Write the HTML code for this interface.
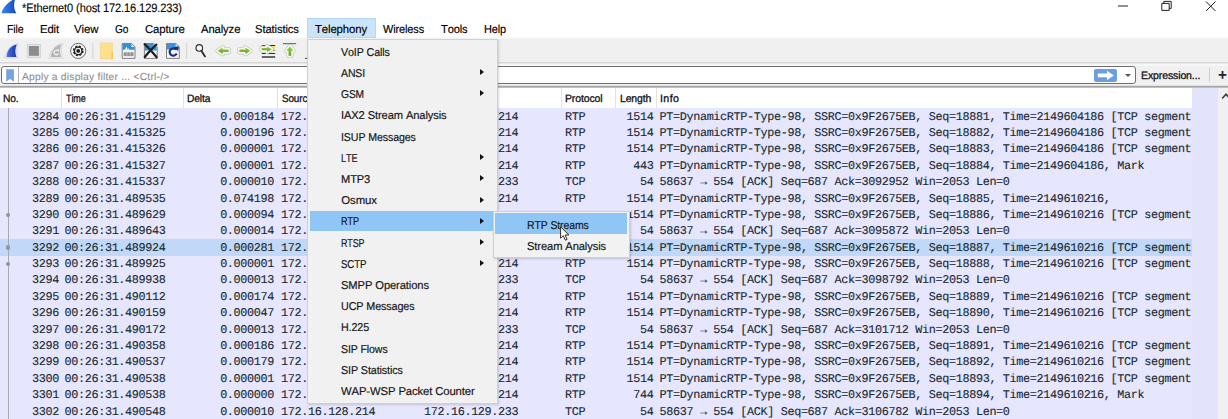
<!DOCTYPE html>
<html><head><meta charset="utf-8"><title>Wireshark</title>
<style>
html,body{margin:0;padding:0}
body{text-rendering:geometricPrecision;width:1228px;height:419px;overflow:hidden;position:relative;background:#fff;font-family:"Liberation Sans",sans-serif;font-size:12px;color:#000}
.abs,.abs *{position:absolute}
div{position:absolute;box-sizing:border-box;white-space:nowrap}
.t{line-height:16px;height:16px}
.m{font-family:"Liberation Mono",monospace;font-size:11.8px;letter-spacing:-0.347px;color:#17292f;-webkit-text-stroke:0.12px #17292f;line-height:16px;height:16px;white-space:pre}
.row{left:0;width:1191.5px;background:#e7e6ff}
.mi{left:341.5px;font-size:12.4px;line-height:16px;color:#111}
.arr{left:480.4px;width:0;height:0;border-left:4.8px solid #111;border-top:3.8px solid transparent;border-bottom:3.8px solid transparent}
.hd{font-size:11.6px;color:#111;line-height:16px;top:90.5px}
.sep{top:88px;width:1px;height:20px;background:#e2e2e2}
</style></head><body>

<div style="left:21.70px;top:0.00px;font-size:12.2px;line-height:16px;height:16px;letter-spacing:-0.120px;color:#000;font-kerning:none;-webkit-text-stroke:0.1px #000;transform:scaleX(0.9061);transform-origin:0 0;">*Ethernet0 (host 172.16.129.233)</div>
<svg style="position:absolute;left:0;top:0" width="20" height="16" viewBox="0 0 20 16"><defs><linearGradient id="tfin" x1="0" y1="0" x2="1" y2="0"><stop offset="0" stop-color="#3f86ee"/><stop offset="0.55" stop-color="#2467d8"/><stop offset="1" stop-color="#1740a8"/></linearGradient></defs><path d="M1.4 13.3C2.6 8 7.5 2 15.4 -1.5C13.4 4 13.6 9 16.4 13.3Z" fill="url(#tfin)"/></svg>
<svg style="position:absolute;left:1110px;top:0" width="118" height="18" viewBox="0 0 118 18"><g stroke="#222" stroke-width="1" fill="none"><path d="M8 6H18"/><path d="M51.8 3.4h7.4v7h-7.4z" fill="#fff"/><path d="M53.8 3.4v-2h7.4v7h-2"/><path d="M96 1.5l9.5 9.5M105.5 1.5L96 11"/></g></svg>
<div style="left:0;top:36px;width:1228px;height:52px;background:linear-gradient(#fff 0,#fff 0.5px,#f0f0f0 3.5px,#f0f0f0 100%)"></div>
<div style="left:307px;top:18px;width:69px;height:20px;background:#cce4f7;border:1px solid #b2d8f7"></div>
<div style="left:0;top:62px;width:1228px;height:1px;background:#d6d6d6"></div>
<div style="left:0;top:63px;width:1228px;height:1px;background:#e6e6e6"></div>
<div style="left:0;top:64px;width:1228px;height:2px;background:#f7f7f7"></div>
<div style="left:0;top:85px;width:1228px;height:1px;background:#e2e2e2"></div>
<div style="left:0;top:86px;width:1228px;height:1px;background:#a4a4a4"></div>
<div style="left:0;top:87px;width:1228px;height:1px;background:#c0c0c0"></div>
<div style="left:7.30px;top:22.00px;font-size:11.5px;line-height:16px;height:16px;letter-spacing:-0.120px;color:#000;font-kerning:none;-webkit-text-stroke:0.15px #000;transform:scaleX(0.9191);transform-origin:0 0;">File</div>
<div style="left:40.00px;top:22.00px;font-size:11.5px;line-height:16px;height:16px;letter-spacing:-0.120px;color:#000;font-kerning:none;-webkit-text-stroke:0.15px #000;transform:scaleX(0.9817);transform-origin:0 0;">Edit</div>
<div style="left:74.30px;top:22.00px;font-size:11.5px;line-height:16px;height:16px;letter-spacing:-0.120px;color:#000;font-kerning:none;-webkit-text-stroke:0.15px #000;transform:scaleX(0.9921);transform-origin:0 0;">View</div>
<div style="left:114.50px;top:22.00px;font-size:11.5px;line-height:16px;height:16px;letter-spacing:-0.120px;color:#000;font-kerning:none;-webkit-text-stroke:0.15px #000;transform:scaleX(0.8804);transform-origin:0 0;">Go</div>
<div style="left:144.80px;top:22.00px;font-size:11.5px;line-height:16px;height:16px;letter-spacing:-0.120px;color:#000;font-kerning:none;-webkit-text-stroke:0.15px #000;transform:scaleX(0.9902);transform-origin:0 0;">Capture</div>
<div style="left:200.50px;top:22.00px;font-size:11.5px;line-height:16px;height:16px;letter-spacing:-0.120px;color:#000;font-kerning:none;-webkit-text-stroke:0.15px #000;transform:scaleX(0.9803);transform-origin:0 0;">Analyze</div>
<div style="left:255.30px;top:22.00px;font-size:11.5px;line-height:16px;height:16px;letter-spacing:-0.120px;color:#000;font-kerning:none;-webkit-text-stroke:0.15px #000;transform:scaleX(0.9770);transform-origin:0 0;">Statistics</div>
<div style="left:315.40px;top:22.00px;font-size:11.5px;line-height:16px;height:16px;letter-spacing:-0.120px;color:#000;font-kerning:none;-webkit-text-stroke:0.15px #000;transform:scaleX(0.9878);transform-origin:0 0;">Telephony</div>
<div style="left:383.40px;top:22.00px;font-size:11.5px;line-height:16px;height:16px;letter-spacing:-0.120px;color:#000;font-kerning:none;-webkit-text-stroke:0.15px #000;transform:scaleX(0.9504);transform-origin:0 0;">Wireless</div>
<div style="left:440.60px;top:22.00px;font-size:11.5px;line-height:16px;height:16px;letter-spacing:-0.120px;color:#000;font-kerning:none;-webkit-text-stroke:0.15px #000;transform:scaleX(0.9623);transform-origin:0 0;">Tools</div>
<div style="left:483.80px;top:22.00px;font-size:11.5px;line-height:16px;height:16px;letter-spacing:-0.120px;color:#000;font-kerning:none;-webkit-text-stroke:0.15px #000;transform:scaleX(0.9531);transform-origin:0 0;">Help</div>
<svg style="position:absolute;left:0;top:38px" width="308" height="24" viewBox="0 38 308 24"><defs><linearGradient id="gfin" x1="0" y1="0" x2="1" y2="0"><stop offset="0" stop-color="#4a74e0"/><stop offset="1" stop-color="#1b36a8"/></linearGradient><linearGradient id="ggr" x1="0" y1="0" x2="0" y2="1"><stop offset="0" stop-color="#9fd24a"/><stop offset="1" stop-color="#5e9e1c"/></linearGradient></defs><path d="M4.6 58.3C5.2 50.5 10.5 44.2 18.6 43.2C16.6 48 16.4 53.5 18.4 58.3Z" fill="#e3e5ec" stroke="#d4d6de" stroke-width="0.6"/><path d="M6.6 56.9C6.9 50.4 11 45.6 16.8 44.6C15 48.5 14.8 53 16.4 56.9Z" fill="url(#gfin)"/><rect x="27.2" y="44.4" width="13.3" height="13" fill="#e4e4e4" stroke="#cfcfcf" stroke-width="0.8"/><rect x="28.9" y="46" width="10" height="9.8" fill="#8c8c8c"/><path d="M49.1 58.3C49.7 50.5 55 44.2 63.1 43.2C61.1 48 60.9 53.5 62.9 58.3Z" fill="#e2e2e2" stroke="#d6d6d6" stroke-width="0.6"/><path d="M51.1 56.9C51.4 50.4 55.5 45.6 61.3 44.6C59.5 48.5 59.3 53 60.9 56.9Z" fill="#b4b4b4"/><path d="M57.6 50.6A2.3 2.3 0 1 0 58.4 53.4" fill="none" stroke="#f6f6f6" stroke-width="1.2"/><path d="M56.4 49.6l2.8-0.4-0.6 2.7z" fill="#f6f6f6"/><circle cx="78.2" cy="50.9" r="7.6" fill="#f6f6f6" stroke="#5a5a5a" stroke-width="0.9"/><circle cx="78.2" cy="50.9" r="4.6" fill="none" stroke="#222" stroke-width="1.6" stroke-dasharray="2.2 1.41"/><circle cx="78.2" cy="50.9" r="3.7" fill="none" stroke="#222" stroke-width="1.3"/><circle cx="78.2" cy="50.9" r="1.9" fill="#111"/><rect x="92.4" y="43" width="1" height="16" fill="#d2d2d2"/><path d="M100.3 42.9H112.4V58.9H100.3Z" fill="#fde08f" stroke="#f3d27a" stroke-width="0.6"/><path d="M111 52.2H112.9V58.9H111Z" fill="#f4c430"/><path d="M111.6 53V58.4" stroke="#fbe28a" stroke-width="0.6"/><path d="M122.2 43.5H131.6L135.0 46.8V58.4H122.2Z" fill="#f4f4f4" stroke="#747474" stroke-width="0.9"/><path d="M122.7 44H131.4L134.5 47V49.8H122.7Z" fill="#2f8fdd"/><path d="M131.4 44V47H134.5Z" fill="#e4f1fc"/><path d="M124 49.8l1.6-1.2 0.9-2.4 0.9 2.8 1.2-0.8 1 1.6z" fill="#eef6fd"/><rect x="123.7" y="52.3" width="9.8" height="3.8" fill="#8e9298"/><path d="M126.9 52.3v3.8M130.2 52.3v3.8" stroke="#d0d0d0" stroke-width="0.8"/><path d="M144.4 43.5H153.8L157.20000000000002 46.8V58.4H144.4Z" fill="#f4f4f4" stroke="#747474" stroke-width="0.9"/><path d="M144.9 44H153.6L156.7 47V50.4H144.9Z" fill="#3a93dc"/><path d="M153.6 44V47H156.7Z" fill="#e4f1fc"/><path d="M144.6 44.2C148 47 153 53 156.6 57.2M156.4 44.6C153 47.5 148 53 144.8 57" stroke="#1e1e1e" stroke-width="2.2" stroke-linecap="round" fill="none"/><path d="M166.5 43.5H175.9L179.3 46.8V58.4H166.5Z" fill="#f4f4f4" stroke="#747474" stroke-width="0.9"/><path d="M167 44H175.7L178.8 47V49.4H167Z" fill="#3a93dc"/><path d="M175.7 44V47H178.8Z" fill="#e4f1fc"/><path d="M176.2 49.6A3.7 3.7 0 1 0 176.7 53.6" fill="none" stroke="#1b2f86" stroke-width="2.2"/><path d="M173.6 47.4l4.9-1.5-0.4 5.2z" fill="#1b2f86"/><rect x="186.2" y="43" width="1" height="16" fill="#d2d2d2"/><circle cx="199.3" cy="47.9" r="3.3" fill="#f6f6f6" stroke="#2a2a2a" stroke-width="1.1"/><path d="M201.4 50.8L205 56.4" stroke="#2a2a2a" stroke-width="1.8" stroke-linecap="round"/><path d="M217.8 50.8L222.6 47.6V49.5H228.6V52.1H222.6V54Z" fill="none" stroke="#b9c0b0" stroke-width="4.6" stroke-linejoin="round"/><path d="M217.8 50.8L222.6 47.6V49.5H228.6V52.1H222.6V54Z" fill="none" stroke="#f3f7ec" stroke-width="3.4" stroke-linejoin="round"/><path d="M217.8 50.8L222.6 47.6V49.5H228.6V52.1H222.6V54Z" fill="url(#ggr)"/><path d="M250.2 50.8L245.4 47.6V49.5H239.4V52.1H245.4V54Z" fill="none" stroke="#b9c0b0" stroke-width="4.6" stroke-linejoin="round"/><path d="M250.2 50.8L245.4 47.6V49.5H239.4V52.1H245.4V54Z" fill="none" stroke="#f3f7ec" stroke-width="3.4" stroke-linejoin="round"/><path d="M250.2 50.8L245.4 47.6V49.5H239.4V52.1H245.4V54Z" fill="url(#ggr)"/><rect x="270.6" y="46.2" width="4.6" height="3.4" fill="#f3e25a"/><path d="M261.8 45.5H275.2M261.8 53.5H275.2" stroke="#2c2c2c" stroke-width="1"/><path d="M261.8 57H275.2" stroke="#2c2c2c" stroke-width="1.4"/><path d="M261.8 50.5H275.2" stroke="#888" stroke-width="0.9"/><path d="M271.6 49.2L267.2 46.5V48.1H261.8V50.3H267.2V51.9Z" fill="none" stroke="#b9c0b0" stroke-width="4.6" stroke-linejoin="round"/><path d="M271.6 49.2L267.2 46.5V48.1H261.8V50.3H267.2V51.9Z" fill="none" stroke="#f3f7ec" stroke-width="3.4" stroke-linejoin="round"/><path d="M271.6 49.2L267.2 46.5V48.1H261.8V50.3H267.2V51.9Z" fill="url(#ggr)"/><path d="M282.9 43.7H296.1" stroke="#555" stroke-width="1"/><path d="M289.9 46.4L293.3 50.8H291.2V55.8H288.6V50.8H286.5Z" fill="none" stroke="#b9c0b0" stroke-width="4.6" stroke-linejoin="round"/><path d="M289.9 46.4L293.3 50.8H291.2V55.8H288.6V50.8H286.5Z" fill="none" stroke="#f3f7ec" stroke-width="3.4" stroke-linejoin="round"/><path d="M289.9 46.4L293.3 50.8H291.2V55.8H288.6V50.8H286.5Z" fill="url(#ggr)"/><path d="M304.9 58.3H308" stroke="#444" stroke-width="1"/></svg>
<div style="left:1px;top:66px;width:1135px;height:18px;background:#fff;border:1px solid #707070;border-radius:3px"></div>
<div style="left:18.3px;top:67px;width:1px;height:16px;background:#b5b5b5"></div>
<svg style="position:absolute;left:5px;top:69px" width="10" height="14" viewBox="0 0 10 14"><path d="M1.2 0.3H8.9V12.8L5.05 9.8L1.2 12.8Z" fill="#76a3e0"/></svg>
<div style="left:22.00px;top:70.00px;font-size:10.3px;line-height:16px;height:16px;letter-spacing:0.207px;color:#8e8e8e;font-kerning:none;-webkit-text-stroke:0.1px #8e8e8e;">Apply a display filter ... &lt;Ctrl-/&gt;</div>
<div style="left:1094.1px;top:68.8px;width:23.1px;height:13.1px;background:#6c9fe0;border-radius:2px"></div>
<svg style="position:absolute;left:1097px;top:70px" width="18" height="11" viewBox="0 0 18 11"><path d="M0.8 3.6H10V0.8L16.8 5.4L10 10V7.2H0.8Z" fill="#fff"/></svg>
<div style="left:1125px;top:73.6px;width:0;height:0;border-top:3.6px solid #555;border-left:3px solid transparent;border-right:3px solid transparent"></div>
<div style="left:1140.60px;top:68.00px;font-size:10.8px;line-height:16px;height:16px;letter-spacing:-0.120px;color:#111;font-kerning:none;-webkit-text-stroke:0.3px #111;transform:scaleX(0.9740);transform-origin:0 0;">Expression...</div>
<div style="left:1208.7px;top:68px;width:1px;height:14px;background:#cfcfcf"></div>
<div class="t" style="left:1218.0px;top:67.6px;font-size:15.3px;font-weight:bold;color:#222;font-family:'Liberation Sans',sans-serif">+</div>
<div style="left:0;top:88px;width:1191.5px;height:20.4px;background:#fff"></div>
<div style="left:3.20px;top:91.00px;font-size:10.7px;line-height:16px;height:16px;letter-spacing:-0.120px;color:#111;font-kerning:none;-webkit-text-stroke:0.3px #111;transform:scaleX(0.9567);transform-origin:0 0;">No.</div>
<div style="left:66.10px;top:91.00px;font-size:10.7px;line-height:16px;height:16px;letter-spacing:-0.120px;color:#111;font-kerning:none;-webkit-text-stroke:0.3px #111;transform:scaleX(0.8413);transform-origin:0 0;">Time</div>
<div style="left:186.80px;top:91.00px;font-size:10.7px;line-height:16px;height:16px;letter-spacing:-0.120px;color:#111;font-kerning:none;-webkit-text-stroke:0.3px #111;transform:scaleX(0.9592);transform-origin:0 0;">Delta</div>
<div style="left:282.20px;top:91.00px;font-size:10.7px;line-height:16px;height:16px;letter-spacing:-0.120px;color:#111;font-kerning:none;-webkit-text-stroke:0.3px #111;transform:scaleX(0.9249);transform-origin:0 0;">Source</div>
<div style="left:425.00px;top:91.00px;font-size:10.7px;line-height:16px;height:16px;letter-spacing:-0.120px;color:#111;font-kerning:none;-webkit-text-stroke:0.3px #111;transform:scaleX(0.9937);transform-origin:0 0;">Destination</div>
<div style="left:565.40px;top:91.00px;font-size:10.7px;line-height:16px;height:16px;letter-spacing:-0.120px;color:#111;font-kerning:none;-webkit-text-stroke:0.3px #111;transform:scaleX(0.9788);transform-origin:0 0;">Protocol</div>
<div style="left:619.70px;top:91.00px;font-size:10.7px;line-height:16px;height:16px;letter-spacing:-0.120px;color:#111;font-kerning:none;-webkit-text-stroke:0.3px #111;transform:scaleX(0.9743);transform-origin:0 0;">Length</div>
<div style="left:660.00px;top:91.00px;font-size:10.7px;line-height:16px;height:16px;letter-spacing:0.384px;color:#111;font-kerning:none;-webkit-text-stroke:0.3px #111;">Info</div>
<div class="sep" style="left:61px"></div>
<div class="sep" style="left:182.5px"></div>
<div class="sep" style="left:277.2px"></div>
<div class="sep" style="left:420px"></div>
<div class="sep" style="left:561.3px"></div>
<div class="sep" style="left:614.7px"></div>
<div class="sep" style="left:655.8px"></div>
<div class="row" style="top:108.40px;height:16.69px;background:#e7e6ff">
<div class="m" style="left:5px;width:54px;text-align:right;top:0.2px">3284</div>
<div class="m" style="left:64.5px;top:0.2px">00:26:31.415129</div>
<div class="m" style="left:186px;width:88px;text-align:right;top:0.2px">0.000184</div>
<div class="m" style="left:281px;top:0.2px">172.16.129.233</div>
<div class="m" style="left:424px;top:0.2px">172.16.128.214</div>
<div class="m" style="left:565px;top:0.2px">RTP</div>
<div class="m" style="left:600px;width:53.5px;text-align:right;top:0.2px">1514</div>
<div class="m" style="left:659.5px;top:0.2px">PT=DynamicRTP-Type-98, SSRC=0x9F2675EB, Seq=18881, Time=2149604186 [TCP segment</div>
</div>
<div class="row" style="top:124.79px;height:16.69px;background:#e7e6ff">
<div class="m" style="left:5px;width:54px;text-align:right;top:0.2px">3285</div>
<div class="m" style="left:64.5px;top:0.2px">00:26:31.415325</div>
<div class="m" style="left:186px;width:88px;text-align:right;top:0.2px">0.000196</div>
<div class="m" style="left:281px;top:0.2px">172.16.129.233</div>
<div class="m" style="left:424px;top:0.2px">172.16.128.214</div>
<div class="m" style="left:565px;top:0.2px">RTP</div>
<div class="m" style="left:600px;width:53.5px;text-align:right;top:0.2px">1514</div>
<div class="m" style="left:659.5px;top:0.2px">PT=DynamicRTP-Type-98, SSRC=0x9F2675EB, Seq=18882, Time=2149604186 [TCP segment</div>
</div>
<div class="row" style="top:141.17px;height:16.69px;background:#e7e6ff">
<div class="m" style="left:5px;width:54px;text-align:right;top:0.2px">3286</div>
<div class="m" style="left:64.5px;top:0.2px">00:26:31.415326</div>
<div class="m" style="left:186px;width:88px;text-align:right;top:0.2px">0.000001</div>
<div class="m" style="left:281px;top:0.2px">172.16.129.233</div>
<div class="m" style="left:424px;top:0.2px">172.16.128.214</div>
<div class="m" style="left:565px;top:0.2px">RTP</div>
<div class="m" style="left:600px;width:53.5px;text-align:right;top:0.2px">1514</div>
<div class="m" style="left:659.5px;top:0.2px">PT=DynamicRTP-Type-98, SSRC=0x9F2675EB, Seq=18883, Time=2149604186 [TCP segment</div>
</div>
<div class="row" style="top:157.56px;height:16.69px;background:#e7e6ff">
<div class="m" style="left:5px;width:54px;text-align:right;top:0.2px">3287</div>
<div class="m" style="left:64.5px;top:0.2px">00:26:31.415327</div>
<div class="m" style="left:186px;width:88px;text-align:right;top:0.2px">0.000001</div>
<div class="m" style="left:281px;top:0.2px">172.16.129.233</div>
<div class="m" style="left:424px;top:0.2px">172.16.128.214</div>
<div class="m" style="left:565px;top:0.2px">RTP</div>
<div class="m" style="left:600px;width:53.5px;text-align:right;top:0.2px">443</div>
<div class="m" style="left:659.5px;top:0.2px">PT=DynamicRTP-Type-98, SSRC=0x9F2675EB, Seq=18884, Time=2149604186, Mark</div>
</div>
<div class="row" style="top:173.94px;height:16.69px;background:#e7e6ff">
<div class="m" style="left:5px;width:54px;text-align:right;top:0.2px">3288</div>
<div class="m" style="left:64.5px;top:0.2px">00:26:31.415337</div>
<div class="m" style="left:186px;width:88px;text-align:right;top:0.2px">0.000010</div>
<div class="m" style="left:281px;top:0.2px">172.16.128.214</div>
<div class="m" style="left:424px;top:0.2px">172.16.129.233</div>
<div class="m" style="left:565px;top:0.2px">TCP</div>
<div class="m" style="left:600px;width:53.5px;text-align:right;top:0.2px">54</div>
<div class="m" style="left:659.5px;top:0.2px">58637 → 554 [ACK] Seq=687 Ack=3092952 Win=2053 Len=0</div>
</div>
<div class="row" style="top:190.33px;height:16.69px;background:#e7e6ff">
<div class="m" style="left:5px;width:54px;text-align:right;top:0.2px">3289</div>
<div class="m" style="left:64.5px;top:0.2px">00:26:31.489535</div>
<div class="m" style="left:186px;width:88px;text-align:right;top:0.2px">0.074198</div>
<div class="m" style="left:281px;top:0.2px">172.16.129.233</div>
<div class="m" style="left:424px;top:0.2px">172.16.128.214</div>
<div class="m" style="left:565px;top:0.2px">RTP</div>
<div class="m" style="left:600px;width:53.5px;text-align:right;top:0.2px">1514</div>
<div class="m" style="left:659.5px;top:0.2px">PT=DynamicRTP-Type-98, SSRC=0x9F2675EB, Seq=18885, Time=2149610216,</div>
</div>
<div class="row" style="top:206.72px;height:16.69px;background:#e7e6ff">
<div class="m" style="left:5px;width:54px;text-align:right;top:0.2px">3290</div>
<div class="m" style="left:64.5px;top:0.2px">00:26:31.489629</div>
<div class="m" style="left:186px;width:88px;text-align:right;top:0.2px">0.000094</div>
<div class="m" style="left:281px;top:0.2px">172.16.129.233</div>
<div class="m" style="left:424px;top:0.2px">172.16.128.214</div>
<div class="m" style="left:565px;top:0.2px">RTP</div>
<div class="m" style="left:600px;width:53.5px;text-align:right;top:0.2px">1514</div>
<div class="m" style="left:659.5px;top:0.2px">PT=DynamicRTP-Type-98, SSRC=0x9F2675EB, Seq=18886, Time=2149610216 [TCP segment</div>
</div>
<div class="row" style="top:223.10px;height:16.69px;background:#e7e6ff">
<div class="m" style="left:5px;width:54px;text-align:right;top:0.2px">3291</div>
<div class="m" style="left:64.5px;top:0.2px">00:26:31.489643</div>
<div class="m" style="left:186px;width:88px;text-align:right;top:0.2px">0.000014</div>
<div class="m" style="left:281px;top:0.2px">172.16.128.214</div>
<div class="m" style="left:424px;top:0.2px">172.16.129.233</div>
<div class="m" style="left:565px;top:0.2px">TCP</div>
<div class="m" style="left:600px;width:53.5px;text-align:right;top:0.2px">54</div>
<div class="m" style="left:659.5px;top:0.2px">58637 → 554 [ACK] Seq=687 Ack=3095872 Win=2053 Len=0</div>
</div>
<div class="row" style="top:239.49px;height:16.69px;background:#c1d8f8">
<div class="m" style="left:5px;width:54px;text-align:right;top:0.2px">3292</div>
<div class="m" style="left:64.5px;top:0.2px">00:26:31.489924</div>
<div class="m" style="left:186px;width:88px;text-align:right;top:0.2px">0.000281</div>
<div class="m" style="left:281px;top:0.2px">172.16.129.233</div>
<div class="m" style="left:424px;top:0.2px">172.16.128.214</div>
<div class="m" style="left:565px;top:0.2px">RTP</div>
<div class="m" style="left:600px;width:53.5px;text-align:right;top:0.2px">1514</div>
<div class="m" style="left:659.5px;top:0.2px">PT=DynamicRTP-Type-98, SSRC=0x9F2675EB, Seq=18887, Time=2149610216 [TCP segment</div>
</div>
<div class="row" style="top:255.87px;height:16.69px;background:#e7e6ff">
<div class="m" style="left:5px;width:54px;text-align:right;top:0.2px">3293</div>
<div class="m" style="left:64.5px;top:0.2px">00:26:31.489925</div>
<div class="m" style="left:186px;width:88px;text-align:right;top:0.2px">0.000001</div>
<div class="m" style="left:281px;top:0.2px">172.16.129.233</div>
<div class="m" style="left:424px;top:0.2px">172.16.128.214</div>
<div class="m" style="left:565px;top:0.2px">RTP</div>
<div class="m" style="left:600px;width:53.5px;text-align:right;top:0.2px">1514</div>
<div class="m" style="left:659.5px;top:0.2px">PT=DynamicRTP-Type-98, SSRC=0x9F2675EB, Seq=18888, Time=2149610216 [TCP segment</div>
</div>
<div class="row" style="top:272.26px;height:16.69px;background:#e7e6ff">
<div class="m" style="left:5px;width:54px;text-align:right;top:0.2px">3294</div>
<div class="m" style="left:64.5px;top:0.2px">00:26:31.489938</div>
<div class="m" style="left:186px;width:88px;text-align:right;top:0.2px">0.000013</div>
<div class="m" style="left:281px;top:0.2px">172.16.128.214</div>
<div class="m" style="left:424px;top:0.2px">172.16.129.233</div>
<div class="m" style="left:565px;top:0.2px">TCP</div>
<div class="m" style="left:600px;width:53.5px;text-align:right;top:0.2px">54</div>
<div class="m" style="left:659.5px;top:0.2px">58637 → 554 [ACK] Seq=687 Ack=3098792 Win=2053 Len=0</div>
</div>
<div class="row" style="top:288.65px;height:16.69px;background:#e7e6ff">
<div class="m" style="left:5px;width:54px;text-align:right;top:0.2px">3295</div>
<div class="m" style="left:64.5px;top:0.2px">00:26:31.490112</div>
<div class="m" style="left:186px;width:88px;text-align:right;top:0.2px">0.000174</div>
<div class="m" style="left:281px;top:0.2px">172.16.129.233</div>
<div class="m" style="left:424px;top:0.2px">172.16.128.214</div>
<div class="m" style="left:565px;top:0.2px">RTP</div>
<div class="m" style="left:600px;width:53.5px;text-align:right;top:0.2px">1514</div>
<div class="m" style="left:659.5px;top:0.2px">PT=DynamicRTP-Type-98, SSRC=0x9F2675EB, Seq=18889, Time=2149610216 [TCP segment</div>
</div>
<div class="row" style="top:305.03px;height:16.69px;background:#e7e6ff">
<div class="m" style="left:5px;width:54px;text-align:right;top:0.2px">3296</div>
<div class="m" style="left:64.5px;top:0.2px">00:26:31.490159</div>
<div class="m" style="left:186px;width:88px;text-align:right;top:0.2px">0.000047</div>
<div class="m" style="left:281px;top:0.2px">172.16.129.233</div>
<div class="m" style="left:424px;top:0.2px">172.16.128.214</div>
<div class="m" style="left:565px;top:0.2px">RTP</div>
<div class="m" style="left:600px;width:53.5px;text-align:right;top:0.2px">1514</div>
<div class="m" style="left:659.5px;top:0.2px">PT=DynamicRTP-Type-98, SSRC=0x9F2675EB, Seq=18890, Time=2149610216 [TCP segment</div>
</div>
<div class="row" style="top:321.42px;height:16.69px;background:#e7e6ff">
<div class="m" style="left:5px;width:54px;text-align:right;top:0.2px">3297</div>
<div class="m" style="left:64.5px;top:0.2px">00:26:31.490172</div>
<div class="m" style="left:186px;width:88px;text-align:right;top:0.2px">0.000013</div>
<div class="m" style="left:281px;top:0.2px">172.16.128.214</div>
<div class="m" style="left:424px;top:0.2px">172.16.129.233</div>
<div class="m" style="left:565px;top:0.2px">TCP</div>
<div class="m" style="left:600px;width:53.5px;text-align:right;top:0.2px">54</div>
<div class="m" style="left:659.5px;top:0.2px">58637 → 554 [ACK] Seq=687 Ack=3101712 Win=2053 Len=0</div>
</div>
<div class="row" style="top:337.80px;height:16.69px;background:#e7e6ff">
<div class="m" style="left:5px;width:54px;text-align:right;top:0.2px">3298</div>
<div class="m" style="left:64.5px;top:0.2px">00:26:31.490358</div>
<div class="m" style="left:186px;width:88px;text-align:right;top:0.2px">0.000186</div>
<div class="m" style="left:281px;top:0.2px">172.16.129.233</div>
<div class="m" style="left:424px;top:0.2px">172.16.128.214</div>
<div class="m" style="left:565px;top:0.2px">RTP</div>
<div class="m" style="left:600px;width:53.5px;text-align:right;top:0.2px">1514</div>
<div class="m" style="left:659.5px;top:0.2px">PT=DynamicRTP-Type-98, SSRC=0x9F2675EB, Seq=18891, Time=2149610216 [TCP segment</div>
</div>
<div class="row" style="top:354.19px;height:16.69px;background:#e7e6ff">
<div class="m" style="left:5px;width:54px;text-align:right;top:0.2px">3299</div>
<div class="m" style="left:64.5px;top:0.2px">00:26:31.490537</div>
<div class="m" style="left:186px;width:88px;text-align:right;top:0.2px">0.000179</div>
<div class="m" style="left:281px;top:0.2px">172.16.129.233</div>
<div class="m" style="left:424px;top:0.2px">172.16.128.214</div>
<div class="m" style="left:565px;top:0.2px">RTP</div>
<div class="m" style="left:600px;width:53.5px;text-align:right;top:0.2px">1514</div>
<div class="m" style="left:659.5px;top:0.2px">PT=DynamicRTP-Type-98, SSRC=0x9F2675EB, Seq=18892, Time=2149610216 [TCP segment</div>
</div>
<div class="row" style="top:370.58px;height:16.69px;background:#e7e6ff">
<div class="m" style="left:5px;width:54px;text-align:right;top:0.2px">3300</div>
<div class="m" style="left:64.5px;top:0.2px">00:26:31.490538</div>
<div class="m" style="left:186px;width:88px;text-align:right;top:0.2px">0.000001</div>
<div class="m" style="left:281px;top:0.2px">172.16.129.233</div>
<div class="m" style="left:424px;top:0.2px">172.16.128.214</div>
<div class="m" style="left:565px;top:0.2px">RTP</div>
<div class="m" style="left:600px;width:53.5px;text-align:right;top:0.2px">1514</div>
<div class="m" style="left:659.5px;top:0.2px">PT=DynamicRTP-Type-98, SSRC=0x9F2675EB, Seq=18893, Time=2149610216 [TCP segment</div>
</div>
<div class="row" style="top:386.96px;height:16.69px;background:#e7e6ff">
<div class="m" style="left:5px;width:54px;text-align:right;top:0.2px">3301</div>
<div class="m" style="left:64.5px;top:0.2px">00:26:31.490538</div>
<div class="m" style="left:186px;width:88px;text-align:right;top:0.2px">0.000000</div>
<div class="m" style="left:281px;top:0.2px">172.16.129.233</div>
<div class="m" style="left:424px;top:0.2px">172.16.128.214</div>
<div class="m" style="left:565px;top:0.2px">RTP</div>
<div class="m" style="left:600px;width:53.5px;text-align:right;top:0.2px">744</div>
<div class="m" style="left:659.5px;top:0.2px">PT=DynamicRTP-Type-98, SSRC=0x9F2675EB, Seq=18894, Time=2149610216, Mark</div>
</div>
<div class="row" style="top:403.35px;height:16.69px;background:#e7e6ff">
<div class="m" style="left:5px;width:54px;text-align:right;top:0.2px">3302</div>
<div class="m" style="left:64.5px;top:0.2px">00:26:31.490548</div>
<div class="m" style="left:186px;width:88px;text-align:right;top:0.2px">0.000010</div>
<div class="m" style="left:281px;top:0.2px">172.16.128.214</div>
<div class="m" style="left:424px;top:0.2px">172.16.129.233</div>
<div class="m" style="left:565px;top:0.2px">TCP</div>
<div class="m" style="left:600px;width:53.5px;text-align:right;top:0.2px">54</div>
<div class="m" style="left:659.5px;top:0.2px">58637 → 554 [ACK] Seq=687 Ack=3106782 Win=2053 Len=0</div>
</div>
<div style="left:1191.5px;top:88px;width:26px;height:331px;background:#e4e3fc"></div>
<div style="left:1217.5px;top:88px;width:11px;height:331px;background:#f0f0f0"></div>
<svg style="position:absolute;left:1218px;top:92px" width="10" height="9" viewBox="0 0 10 9"><path d="M4.2 6.6L8 2.2L11.8 6.6" stroke="#3a3a3a" stroke-width="1.5" fill="none"/></svg>
<div style="left:7.6px;top:108px;width:1px;height:311px;background:#a9a9b5"></div>
<div style="left:5.8px;top:212.61px;width:4.6px;height:4.6px;border-radius:50%;background:#8c989c"></div>
<div style="left:5.8px;top:245.38px;width:4.6px;height:4.6px;border-radius:50%;background:#8c989c"></div>
<div style="left:5.8px;top:261.77px;width:4.6px;height:4.6px;border-radius:50%;background:#8c989c"></div>
<div style="left:307px;top:38.5px;width:191px;height:365px;background:#f1f1f1;border:1px solid #d0d0d0;box-shadow:1px 1px 2px rgba(0,0,0,0.15)"></div>
<div style="left:341.30px;top:45.00px;font-size:11.4px;line-height:16px;height:16px;letter-spacing:-0.120px;color:#161616;font-kerning:none;-webkit-text-stroke:0.18px #161616;transform:scaleX(0.9398);transform-origin:0 0;">VoIP Calls</div>
<div style="left:341.30px;top:66.00px;font-size:11.4px;line-height:16px;height:16px;letter-spacing:-0.120px;color:#161616;font-kerning:none;-webkit-text-stroke:0.18px #161616;transform:scaleX(0.9220);transform-origin:0 0;">ANSI</div>
<div class="arr" style="top:69.26px"></div>
<div style="left:341.30px;top:87.00px;font-size:11.4px;line-height:16px;height:16px;letter-spacing:-0.120px;color:#161616;font-kerning:none;-webkit-text-stroke:0.18px #161616;transform:scaleX(0.9018);transform-origin:0 0;">GSM</div>
<div class="arr" style="top:90.47px"></div>
<div style="left:341.30px;top:108.00px;font-size:11.4px;line-height:16px;height:16px;letter-spacing:-0.120px;color:#161616;font-kerning:none;-webkit-text-stroke:0.18px #161616;transform:scaleX(0.9790);transform-origin:0 0;">IAX2 Stream Analysis</div>
<div style="left:341.30px;top:130.00px;font-size:11.4px;line-height:16px;height:16px;letter-spacing:-0.120px;color:#161616;font-kerning:none;-webkit-text-stroke:0.18px #161616;transform:scaleX(0.9329);transform-origin:0 0;">ISUP Messages</div>
<div style="left:341.30px;top:151.00px;font-size:11.4px;line-height:16px;height:16px;letter-spacing:-0.120px;color:#161616;font-kerning:none;-webkit-text-stroke:0.18px #161616;transform:scaleX(0.7984);transform-origin:0 0;">LTE</div>
<div class="arr" style="top:154.10px"></div>
<div style="left:341.30px;top:172.00px;font-size:11.4px;line-height:16px;height:16px;letter-spacing:-0.120px;color:#161616;font-kerning:none;-webkit-text-stroke:0.18px #161616;transform:scaleX(0.9752);transform-origin:0 0;">MTP3</div>
<div class="arr" style="top:175.31px"></div>
<div style="left:341.30px;top:193.00px;font-size:11.4px;line-height:16px;height:16px;letter-spacing:-0.101px;color:#161616;font-kerning:none;-webkit-text-stroke:0.18px #161616;">Osmux</div>
<div class="arr" style="top:196.52px"></div>
<div style="left:310.3px;top:211px;width:186px;height:20px;background:#8fc6f5"></div>
<div style="left:341.30px;top:214.00px;font-size:11.4px;line-height:16px;height:16px;letter-spacing:-0.120px;color:#161616;font-kerning:none;-webkit-text-stroke:0.18px #161616;transform:scaleX(0.8023);transform-origin:0 0;">RTP</div>
<div class="arr" style="top:217.73px"></div>
<div style="left:341.30px;top:236.00px;font-size:11.4px;line-height:16px;height:16px;letter-spacing:-0.120px;color:#161616;font-kerning:none;-webkit-text-stroke:0.18px #161616;transform:scaleX(0.7855);transform-origin:0 0;">RTSP</div>
<div class="arr" style="top:238.94px"></div>
<div style="left:341.30px;top:257.00px;font-size:11.4px;line-height:16px;height:16px;letter-spacing:-0.120px;color:#161616;font-kerning:none;-webkit-text-stroke:0.18px #161616;transform:scaleX(0.8521);transform-origin:0 0;">SCTP</div>
<div class="arr" style="top:260.15px"></div>
<div style="left:341.30px;top:278.00px;font-size:11.4px;line-height:16px;height:16px;letter-spacing:-0.120px;color:#161616;font-kerning:none;-webkit-text-stroke:0.18px #161616;transform:scaleX(0.9837);transform-origin:0 0;">SMPP Operations</div>
<div style="left:341.30px;top:299.00px;font-size:11.4px;line-height:16px;height:16px;letter-spacing:-0.120px;color:#161616;font-kerning:none;-webkit-text-stroke:0.18px #161616;transform:scaleX(0.9464);transform-origin:0 0;">UCP Messages</div>
<div style="left:341.30px;top:320.00px;font-size:11.4px;line-height:16px;height:16px;letter-spacing:-0.120px;color:#161616;font-kerning:none;-webkit-text-stroke:0.18px #161616;transform:scaleX(0.9385);transform-origin:0 0;">H.225</div>
<div style="left:341.30px;top:342.00px;font-size:11.4px;line-height:16px;height:16px;letter-spacing:-0.120px;color:#161616;font-kerning:none;-webkit-text-stroke:0.18px #161616;transform:scaleX(0.9275);transform-origin:0 0;">SIP Flows</div>
<div style="left:341.30px;top:363.00px;font-size:11.4px;line-height:16px;height:16px;letter-spacing:-0.120px;color:#161616;font-kerning:none;-webkit-text-stroke:0.18px #161616;transform:scaleX(0.9437);transform-origin:0 0;">SIP Statistics</div>
<div style="left:341.30px;top:384.00px;font-size:11.4px;line-height:16px;height:16px;letter-spacing:-0.120px;color:#161616;font-kerning:none;-webkit-text-stroke:0.18px #161616;transform:scaleX(0.9915);transform-origin:0 0;">WAP-WSP Packet Counter</div>
<div style="left:498.5px;top:209px;width:132px;height:3px;background:#e7e6ff"></div>
<div style="left:492.8px;top:211px;width:137.7px;height:47px;background:#f2f2f2;border:1px solid #d0d0d0;box-shadow:1px 1px 2px rgba(0,0,0,0.18)"></div>
<div style="left:495.1px;top:213.3px;width:132px;height:20.7px;background:#8fc6f5"></div>
<div style="left:526.80px;top:218.00px;font-size:11.4px;line-height:16px;height:16px;letter-spacing:-0.120px;color:#161616;font-kerning:none;-webkit-text-stroke:0.18px #161616;transform:scaleX(0.9195);transform-origin:0 0;">RTP Streams</div>
<div style="left:526.80px;top:239.00px;font-size:11.4px;line-height:16px;height:16px;letter-spacing:-0.120px;color:#161616;font-kerning:none;-webkit-text-stroke:0.18px #161616;transform:scaleX(0.9816);transform-origin:0 0;">Stream Analysis</div>
<svg style="position:absolute;left:559px;top:225px" width="14" height="18" viewBox="0 0 14 18"><path d="M1.6 1.8V13.2L4.3 10.7L6.3 15.2L8.1 14.4L6.1 10H9.8Z" fill="#fff" stroke="#1a1a1a" stroke-width="0.9" stroke-linejoin="round"/></svg>
</body></html>
